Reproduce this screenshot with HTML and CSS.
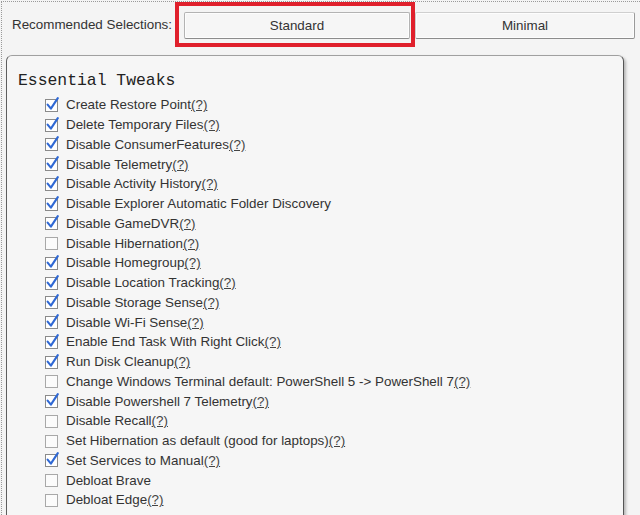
FILE: index.html
```html
<!DOCTYPE html>
<html lang="en">
<head>
    <meta charset="UTF-8">
    <meta name="viewport" content="width=device-width, initial-scale=1.0">
    <title>Tweaks</title>
    <link rel="stylesheet" href="styles.css">
</head>
<body>

    <div class="page">
        <div class="selections">
            <span class="selections-label">Recommended Selections:</span>
            <span class="mark">
                <button class="pick">Standard</button>
            </span>
            <button class="pick pick-wide">Minimal</button>
        </div>

        <div class="panel">
            <h1>Essential Tweaks</h1>
            <ul id="tweakList" class="tweaks">
                <!-- rows are built below -->
            </ul>
        </div>
    </div>

    <script>
        // [label, checked, has help link]
        const tweaks = [
            ["Create Restore Point", true, true],
            ["Delete Temporary Files", true, true],
            ["Disable ConsumerFeatures", true, true],
            ["Disable Telemetry", true, true],
            ["Disable Activity History", true, true],
            ["Disable Explorer Automatic Folder Discovery", true, false],
            ["Disable GameDVR", true, true],
            ["Disable Hibernation", false, true],
            ["Disable Homegroup", true, true],
            ["Disable Location Tracking", true, true],
            ["Disable Storage Sense", true, true],
            ["Disable Wi-Fi Sense", true, true],
            ["Enable End Task With Right Click", true, true],
            ["Run Disk Cleanup", true, true],
            ["Change Windows Terminal default: PowerShell 5 -> PowerShell 7", false, true],
            ["Disable Powershell 7 Telemetry", true, true],
            ["Disable Recall", false, true],
            ["Set Hibernation as default (good for laptops)", false, true],
            ["Set Services to Manual", true, true],
            ["Debloat Brave", false, false],
            ["Debloat Edge", false, true]
        ];

        const boxOn = '<svg class="box" width="16" height="16" viewBox="0 0 16 16">' +
            '<rect x="1.5" y="2.5" width="12" height="12" fill="#fff" stroke="#8a8a8a"/>' +
            '<path d="M3.6 7.6 L6.9 11.6 L13.8 1.2" fill="none" stroke="#2f68d4" stroke-width="2.1" stroke-linecap="round" stroke-linejoin="round"/>' +
            '</svg>';
        const boxOff = '<svg class="box" width="16" height="16" viewBox="0 0 16 16">' +
            '<rect x="1.5" y="2.5" width="12" height="12" fill="#fbfbfb" stroke="#a8a8a8"/>' +
            '</svg>';

        const list = document.getElementById("tweakList");
        for (const [label, checked, help] of tweaks) {
            const li = document.createElement("li");
            li.innerHTML = (checked ? boxOn : boxOff) +
                '<span class="tweak-text">' + label.replace(">", "&gt;") +
                (help ? '<a href="#" class="help">(?)</a>' : '') + '</span>';
            list.appendChild(li);
        }
    </script>

</body>
</html>
```

FILE: styles.css
```css
html, body {
    margin: 0;
    height: 100%;
    overflow: hidden;
}
body {
    font-family: "Liberation Sans", Arial, sans-serif;
    font-size: 13.4px;
    background-color: #f4f4f4;
    color: #333;
}
.page {
    min-height: 100%;
    border-top: 1px dotted #9a9a9a;
    border-left: 1px dotted #9a9a9a;
    margin-top: 1px;
    margin-left: 1px;
    box-sizing: border-box;
    padding: 0 5px 0 4px;
}
.selections {
    display: flex;
    align-items: center;
}
.selections-label {
    padding-left: 6px;
    width: 163px;
}
.mark {
    display: inline-block;
    border: 4px solid #e0202c;
    padding: 6px 1px 4px 5px;
}
.pick {
    display: block;
    width: 226px;
    height: 27px;
    font-family: "Liberation Sans", Arial, sans-serif;
    font-size: 13.4px;
    color: #333;
    background-color: #f6f6f6;
    border: 1px solid #b3b3b3;
    border-bottom-color: #8c8c8c;
    border-radius: 2px;
    box-shadow: inset 0 0 0 1px #fdfdfd;
    cursor: pointer;
}
.pick-wide {
    flex: 1;
    width: auto;
    margin-top: 1px;
    border-top-color: #cfcfcf;
    border-left-color: #cfcfcf;
    border-right-color: #9a9a9a;
}
.panel {
    margin-top: 8px;
    width: 618px;
    height: 600px;
    background-color: #f6f6f6;
    border: 1px solid #a0a0a0;
    border-left-color: #5e5e5e;
    border-right-color: #555;
    border-radius: 6px;
    box-shadow: 2px 2px 3px rgba(0, 0, 0, 0.25);
    padding: 13px 0 0 11px;
    box-sizing: border-box;
}
h1 {
    margin: 0;
    font-family: "Liberation Mono", "DejaVu Sans Mono", monospace;
    font-size: 16.4px;
    font-weight: normal;
    line-height: 24px;
    color: #222;
}
.tweaks {
    list-style: none;
    margin: 2px 0 0;
    padding: 0 0 0 26px;
}
.tweaks li {
    display: flex;
    align-items: center;
    height: 19.75px;
}
.box {
    flex: none;
    margin-right: 6px;
}
.tweak-text {
    white-space: nowrap;
}
.help {
    color: #444;
    text-decoration: underline;
}
```
